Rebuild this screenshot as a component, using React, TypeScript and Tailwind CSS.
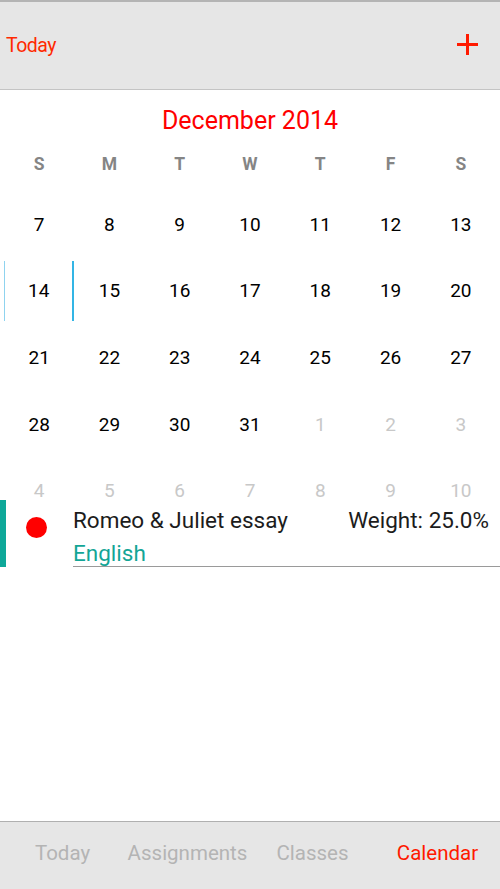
const weeks: { day: number; muted?: boolean }[][] = [
  [7, 8, 9, 10, 11, 12, 13].map((day) => ({ day })),
  [14, 15, 16, 17, 18, 19, 20].map((day) => ({ day })),
  [21, 22, 23, 24, 25, 26, 27].map((day) => ({ day })),
  [
    { day: 28 },
    { day: 29 },
    { day: 30 },
    { day: 31 },
    { day: 1, muted: true },
    { day: 2, muted: true },
    { day: 3, muted: true }
  ],
  [4, 5, 6, 7, 8, 9, 10].map((day) => ({ day, muted: true }))
]

const weekdays = ['S', 'M', 'T', 'W', 'T', 'F', 'S']

const tabs = ['Today', 'Assignments', 'Classes', 'Calendar']

export default function App() {
  return (
    <div className="flex h-[889px] w-[500px] flex-col overflow-hidden bg-white font-['Roboto',sans-serif]">
      <header className="flex h-[90px] shrink-0 items-center justify-between border-t-2 border-b border-t-[#b4b4b4] border-b-[#c4c4c4] bg-[#e6e6e6] pr-[22px] pl-[6px]">
        <span className="text-[19.5px] tracking-[-0.5px] text-[#ff2a00]">Today</span>
        <svg width="21" height="21" viewBox="0 0 21 21" className="mb-[2px]">
          <path d="M10.5 0v21M0 10.5h21" stroke="#ff1a00" strokeWidth="3" />
        </svg>
      </header>

      <section className="flex h-[410px] shrink-0 flex-col overflow-hidden px-[4px]">
        <h2 className="pt-[16px] text-center text-[25px] leading-[30px] text-[#ff0000]">
          December 2014
        </h2>
        <div className="mt-[18px] grid grid-cols-7 pb-[11px]">
          {weekdays.map((d, i) => (
            <span key={i} className="text-center text-[17.5px] leading-[20px] font-bold text-[#858585]">
              {d}
            </span>
          ))}
        </div>
        <div className="h-px bg-[#dcdcdc]" />
        <div className="mt-[6px] flex flex-col">
          {weeks.map((week, w) => (
            <div key={w} className="grid h-[66.6px] grid-cols-7">
              {week.map((c, i) => {
                const selected = c.day === 14 && !c.muted
                return (
                  <div key={i} className="flex items-center justify-center">
                    <div
                      className={`flex h-[60px] w-full items-center justify-center ${
                        selected ? 'border-r-2 border-l border-r-[#33b5e5] border-l-[#8fd3ef]' : ''
                      }`}
                    >
                      <span className={`text-[19px] leading-none ${c.muted ? 'text-[#c8c8c8]' : 'text-black'}`}>
                        {c.day}
                      </span>
                    </div>
                  </div>
                )
              })}
            </div>
          ))}
        </div>
      </section>

      <section className="flex-1">
        <div className="flex h-[67px] items-stretch">
          <div className="w-[6px] shrink-0 bg-[#0ea899]" />
          <div className="w-[67px] shrink-0 pt-[17px] pl-[20px]">
            <div className="size-[21px] rounded-full bg-[#ff0000]" />
          </div>
          <div className="flex min-w-0 flex-1 flex-col border-b border-[#9a9a9a] pt-[5px] pr-[11px]">
            <div className="flex items-center justify-between text-[22.5px] leading-[30px] text-[#1c1c1c]">
              <span>Romeo &amp; Juliet essay</span>
              <span>Weight: 25.0%</span>
            </div>
            <span className="mt-[3px] text-[22.5px] leading-[30px] text-[#13a596]">English</span>
          </div>
        </div>
      </section>

      <nav className="flex h-[68px] shrink-0 items-center border-t border-[#b0b0b0] bg-[#e6e6e6] pb-[4px] text-[20.5px]">
        {tabs.map((t) => (
          <span key={t} className={`flex-1 text-center ${t === 'Calendar' ? 'text-[#ff1a00]' : 'text-[#b4b4b4]'}`}>
            {t}
          </span>
        ))}
      </nav>
    </div>
  )
}
